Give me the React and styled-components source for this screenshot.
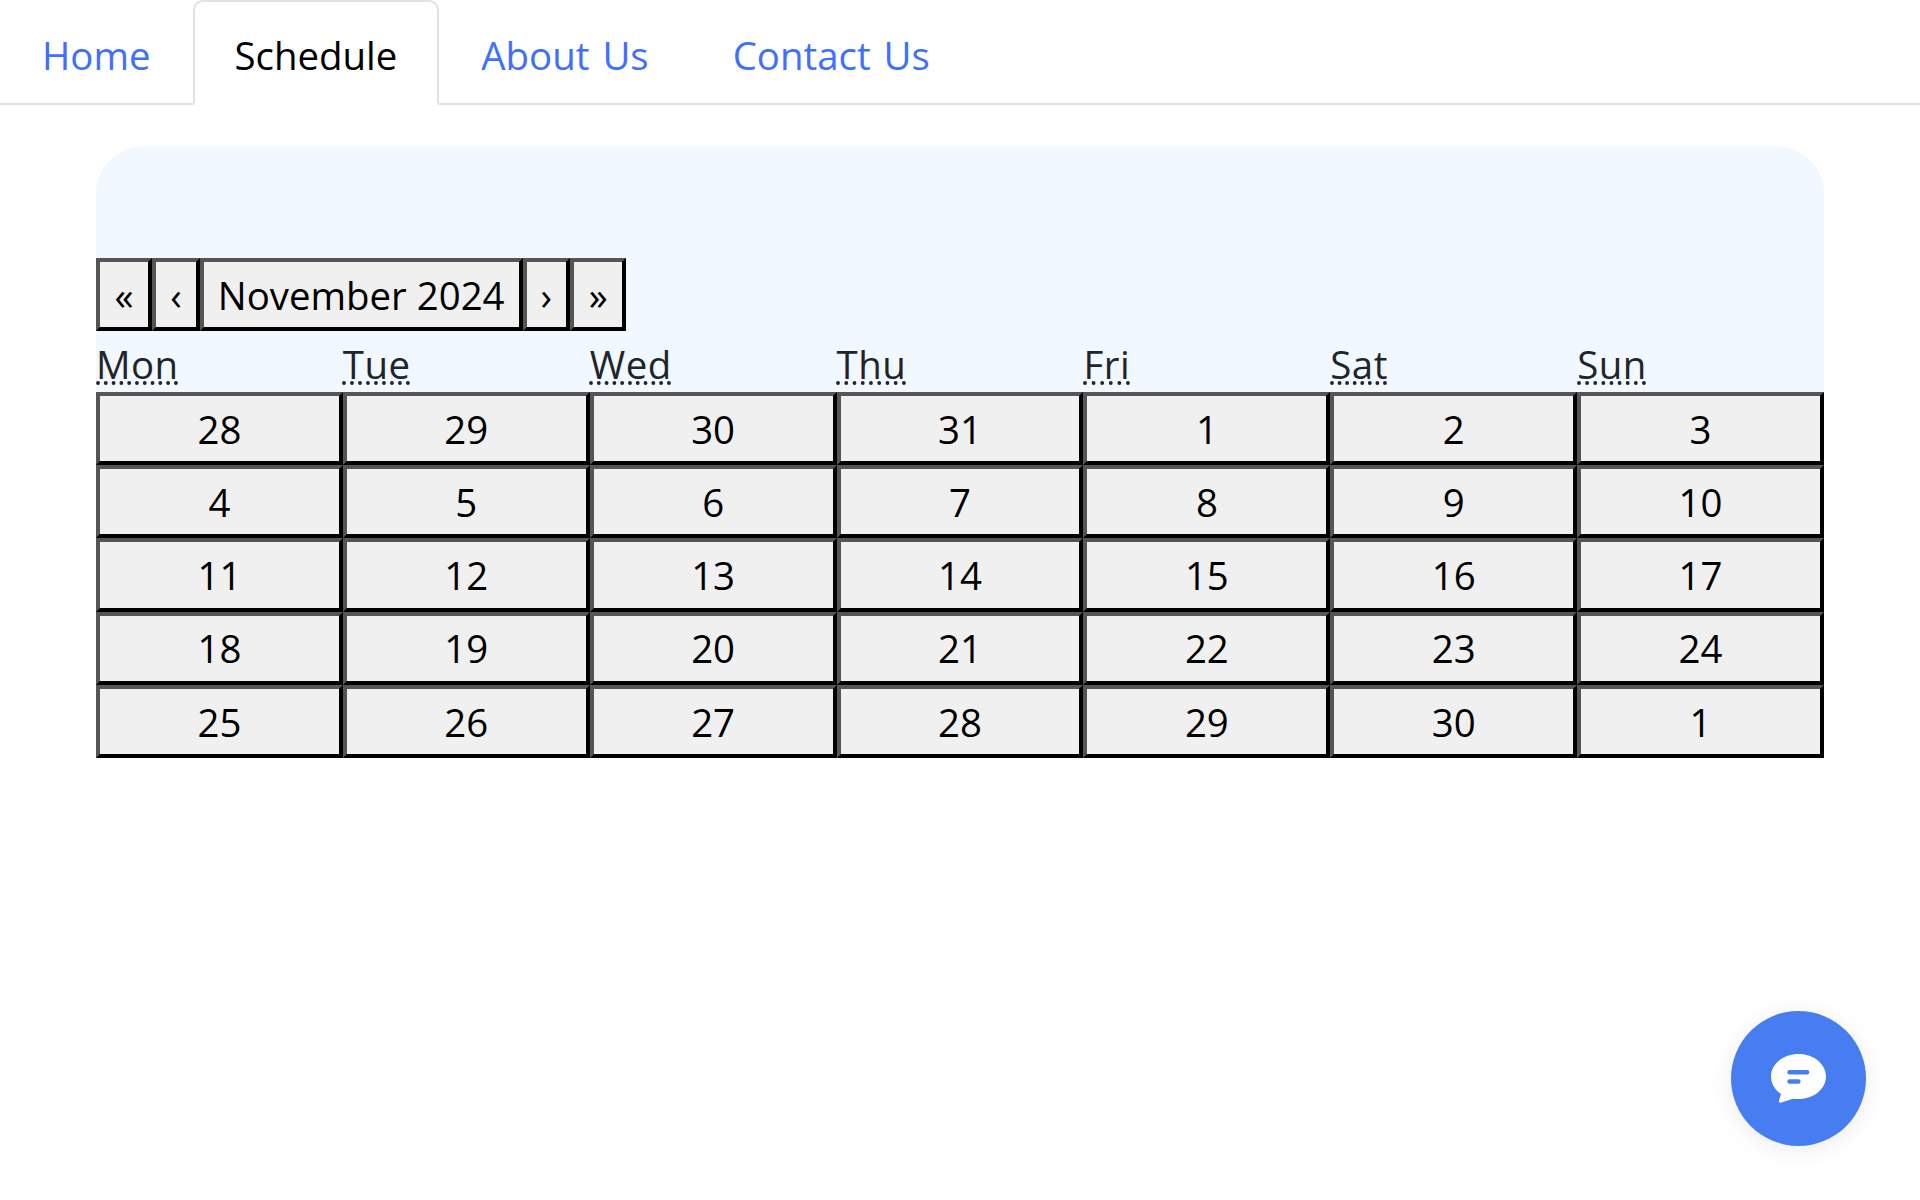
import React from "react";
import styled, { createGlobalStyle } from "styled-components";

const Global = createGlobalStyle`
  html, body { margin: 0; padding: 0; background: #fff; }
  body { font-family: "Open Sans", "Noto Sans", "Liberation Sans", sans-serif; font-size: 38.4px; line-height: 57.6px; color: #212529; }
`;

const TabBar = styled.nav`
  display: flex;
  height: 103px;
  border-bottom: 2px solid #dee2e6;
`;
const Tab = styled.a`
  display: block;
  height: 105px;
  box-sizing: border-box;
  padding: 25px 40px 0;
  word-spacing: 3px;
  color: ${(p) => (p.$active ? "#000" : "#3f6fff")};
  background: ${(p) => (p.$active ? "#fff" : "transparent")};
  border: 2px solid ${(p) => (p.$active ? "#dee2e6" : "transparent")};
  border-bottom-color: ${(p) => (p.$active ? "#fff" : "transparent")};
  border-radius: 10px 10px 0 0;
`;
const Main = styled.main`
  padding: 41px 96px 0;
`;
const Card = styled.section`
  background: #f2f8ff;
  border-radius: 48px 48px 0 0;
  padding-top: 112px;
`;
const Nav = styled.div`
  display: flex;
  height: 73px;
`;
const CalButton = styled.button`
  box-sizing: border-box;
  height: 100%;
  margin: 0;
  padding: 2px ${(p) => p.$pad || 14}px 0;
  font: inherit;
  color: #000;
  background: #f0f0f0;
  border-width: 4px;
  border-style: solid;
  border-color: #555 #000 #000 #555;
`;
const Weekdays = styled.div`
  display: grid;
  grid-template-columns: repeat(7, 1fr);
  height: 61px;
  align-items: end;
`;
const Weekday = styled.abbr`
  text-decoration: underline dotted;
  justify-self: start;
  line-height: 57.6px;
  height: 55.6px;
  letter-spacing: 0.5px;
`;
const Days = styled.div`
  display: grid;
  grid-template-columns: repeat(7, 1fr);
  grid-auto-rows: 73.2px;
`;
const Fab = styled.button`
  position: fixed;
  left: 1731px;
  top: 1011px;
  width: 135px;
  height: 135px;
  border: 0;
  border-radius: 50%;
  background: #487df1;
  box-shadow: 0 4px 24px rgba(0, 0, 0, 0.08);
  display: flex;
  align-items: center;
  justify-content: center;
  padding: 0;
`;

const weekdays = ["Mon", "Tue", "Wed", "Thu", "Fri", "Sat", "Sun"];
const days = [28, 29, 30, 31, ...Array.from({ length: 30 }, (_, i) => i + 1), 1];

export default function App() {
  return (
    <>
      <Global />
      <TabBar>
        <Tab>Home</Tab>
        <Tab $active>Schedule</Tab>
        <Tab>About Us</Tab>
        <Tab>Contact Us</Tab>
      </TabBar>
      <Main>
        <Card>
          <Nav>
            <CalButton $pad={14.6}>«</CalButton>
            <CalButton>‹</CalButton>
            <CalButton>November 2024</CalButton>
            <CalButton>›</CalButton>
            <CalButton $pad={14.6}>»</CalButton>
          </Nav>
          <Weekdays>
            {weekdays.map((d) => (
              <Weekday key={d}>{d}</Weekday>
            ))}
          </Weekdays>
          <Days>
            {days.map((d, i) => (
              <CalButton key={i}>{d}</CalButton>
            ))}
          </Days>
        </Card>
      </Main>
      <Fab aria-label="Chat">
        <svg width="55" height="50" viewBox="0 0 55 50" fill="none">
          <path d="M27.500 0C12.300 0 0 10 0 22.500c0 7 3.800 13.300 10 17.500L8 46.500c-.6 1.800 1 2.600 2.300 2L22 44.800c1.800.2 3.600.3 5.500.3C42.700 45 55 35 55 22.500S42.700 0 27.500 0z" fill="#fff" />
          <rect x="16.300" y="16" width="22" height="4.600" rx="2.300" fill="#487df1" />
          <rect x="16.300" y="25.200" width="13.300" height="4.500" rx="2.250" fill="#487df1" />
        </svg>
      </Fab>
    </>
  );
}
